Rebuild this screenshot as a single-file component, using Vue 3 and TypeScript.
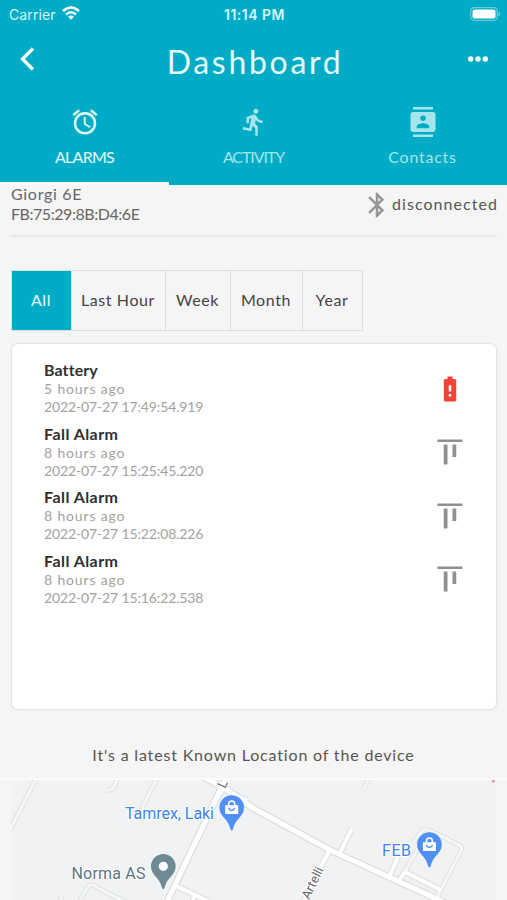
<script setup lang="ts">
import { ref } from 'vue'

interface Tab {
  label: string
  icon: string
}

interface AlarmEntry {
  title: string
  ago: string
  time: string
  kind: 'battery' | 'fall'
}

const tabs: Tab[] = [
  {
    label: 'ALARMS',
    icon: 'M12,20A7,7 0 0,1 5,13A7,7 0 0,1 12,6A7,7 0 0,1 19,13A7,7 0 0,1 12,20M12,4A9,9 0 0,0 3,13A9,9 0 0,0 12,22A9,9 0 0,0 21,13A9,9 0 0,0 12,4M12.5,8H11V14L15.75,16.85L16.5,15.62L12.5,13.25V8M7.88,3.39L6.6,1.86L2,5.71L3.29,7.24L7.88,3.39M22,5.72L17.4,1.86L16.11,3.39L20.71,7.25L22,5.72Z',
  },
  {
    label: 'ACTIVITY',
    icon: 'M13.49 5.48c1.1 0 2-.9 2-2s-.9-2-2-2-2 .9-2 2 .9 2 2 2zm-3.6 13.9l1-4.4 2.1 2v6h2v-7.5l-2.1-2 .6-3c1.3 1.5 3.3 2.5 5.5 2.5v-2c-1.9 0-3.5-1-4.3-2.4l-1-1.6c-.4-.6-1-1-1.7-1-.3 0-.5.1-.8.1l-5.2 2.2v4.7h2v-3.4l1.8-.7-1.6 8.1-4.9-1-.4 2 7 1.4z',
  },
  {
    label: 'Contacts',
    icon: 'M20 0H4v2h16V0zM4 24h16v-2H4v2zM20 4H4c-1.1 0-2 .9-2 2v12c0 1.1.9 2 2 2h16c1.1 0 2-.9 2-2V6c0-1.1-.9-2-2-2zm-8 2.75c1.24 0 2.25 1.01 2.25 2.25s-1.01 2.25-2.25 2.25S9.75 10.24 9.75 9 10.76 6.75 12 6.75zM17 17H7v-1.5c0-1.67 3.33-2.5 5-2.5s5 .83 5 2.5V17z',
  },
]
const activeTab = ref(0)

const ranges: string[] = ['All', 'Last Hour', 'Week', 'Month', 'Year']
const activeRange = ref(0)

const icons: Record<AlarmEntry['kind'], string> = {
  battery:
    'M15.67 4H14V2h-4v2H8.33C7.6 4 7 4.6 7 5.33v15.33C7 21.4 7.6 22 8.33 22h7.33c.74 0 1.34-.6 1.34-1.33V5.33C17 4.6 16.4 4 15.67 4zM13 18h-2v-2h2v2zm0-4h-2V9h2v5z',
  fall: 'M22 2v2H2V2h20zM7 22h3V6H7v16zm7-6h3V6h-3v10z',
}

const alarms: AlarmEntry[] = [
  { title: 'Battery', ago: '5 hours ago', time: '2022-07-27 17:49:54.919', kind: 'battery' },
  { title: 'Fall Alarm', ago: '8 hours ago', time: '2022-07-27 15:25:45.220', kind: 'fall' },
  { title: 'Fall Alarm', ago: '8 hours ago', time: '2022-07-27 15:22:08.226', kind: 'fall' },
  { title: 'Fall Alarm', ago: '8 hours ago', time: '2022-07-27 15:16:22.538', kind: 'fall' },
]

const minorRoads: string[] = [
  'M35 781L10 830',
  'M118 778L114 787Q111 791 106 790',
  'M157 778L142 808',
  'M79 902L88 887Q91 883 95 886L107 893L126 902',
  'M62 896L59 902',
  'M369 778L364 789',
  'M419 847L400 880',
  'M414 842L423 830L429 830L459 845Q463 847 461 851L435 901',
  'M217 800L224 789L248 800',
]
const streets: string[] = [
  'M352 828L340 853',
  'M329 851L302 904',
  'M398 857L390 875',
  'M405 872L441 890',
  'M399 881L405 872',
  'M174 885L210 902',
  'M195 895L192 902',
]
const mainRoads: string[] = ['M225 780L166 904', 'M204 777L227 790L253 808L330 850L448 904']
const pinShape = 'M0-12.3A12.3 12.3 0 0 1 12.3 0C12.3 9.5 3.8 10.5 1.3 21.5Q0 24.5-1.3 21.5C-3.8 10.5-12.3 9.5-12.3 0A12.3 12.3 0 0 1 0-12.3Z'
</script>

<template>
  <main class="screen">
    <header class="header">
      <div class="status">
        <div class="carrier">
          <span>Carrier</span>
          <svg class="wifi" viewBox="0 0 18 14" fill="none" stroke="currentColor" stroke-width="2.5">
            <path d="M1 5.2Q9-2.2 17 5.2M4 8.5Q9 4 14 8.5" />
            <path d="M6.1 10.7Q9 8.2 11.9 10.7L9 13.8Z" fill="currentColor" stroke="none" />
          </svg>
        </div>
        <span class="clock">11:14 PM</span>
        <svg class="battery" viewBox="0 0 30 14">
          <rect x=".7" y=".7" width="26.6" height="12.6" rx="3.6" fill="none" stroke="#fff" stroke-opacity=".4" stroke-width="1.2" />
          <rect x="2.5" y="2.5" width="23" height="9" rx="2" fill="#fff" />
          <path d="M28.5 4.5Q30 5.2 30 7T28.5 9.5Z" fill="#fff" fill-opacity=".45" />
        </svg>
      </div>
      <div class="nav">
        <svg class="back" viewBox="0 0 15 24"><path d="M13 1.5L2.5 12L13 22.5" fill="none" stroke="#fff" stroke-width="3.3" /></svg>
        <h1>Dashboard</h1>
        <svg class="more" viewBox="0 0 20 6" fill="#fff"><circle cx="2.7" cy="3" r="2.7" /><circle cx="10" cy="3" r="2.7" /><circle cx="17.3" cy="3" r="2.7" /></svg>
      </div>
      <nav class="tabs">
        <button v-for="(tab, i) in tabs" :key="tab.label" class="tab" :class="{ active: i === activeTab }" @click="activeTab = i">
          <svg viewBox="0 0 24 24" fill="currentColor"><path :d="tab.icon" /></svg>
          <span>{{ tab.label }}</span>
        </button>
      </nav>
    </header>

    <section class="device">
      <div class="identity">
        <span class="name">Giorgi 6E</span>
        <span class="mac">FB:75:29:8B:D4:6E</span>
      </div>
      <div class="connection">
        <svg viewBox="0 0 24 24" fill="#969696"><path d="M17.71 7.71L12 2h-1v7.59L6.41 5 5 6.41 10.59 12 5 17.59 6.41 19 11 14.41V22h1l5.71-5.71-4.3-4.29 4.3-4.29zM13 5.83l1.88 1.88L13 9.59V5.83zm1.88 10.46L13 18.17v-3.76l1.88 1.88z" /></svg>
        <span>disconnected</span>
      </div>
    </section>

    <div class="ranges">
      <button v-for="(range, i) in ranges" :key="range" class="range" :class="{ active: i === activeRange }" @click="activeRange = i">{{ range }}</button>
    </div>

    <section class="card">
      <article v-for="alarm in alarms" :key="alarm.time" class="alarm">
        <div class="details">
          <h2>{{ alarm.title }}</h2>
          <p class="ago">{{ alarm.ago }}</p>
          <p class="time">{{ alarm.time }}</p>
        </div>
        <svg :class="alarm.kind" viewBox="0 0 24 24" fill="currentColor"><path :d="icons[alarm.kind]" /></svg>
      </article>
    </section>

    <p class="caption">It's a latest Known Location of the device</p>

    <section class="map">
      <svg viewBox="11 780 485 120">
        <g fill="none" stroke-linejoin="round">
          <path v-for="d in minorRoads" :key="'mo' + d" :d="d" stroke="#dfe1e2" stroke-width="5" />
          <path v-for="d in streets" :key="'so' + d" :d="d" stroke="#dcdee0" stroke-width="6" />
          <path v-for="d in mainRoads" :key="'ro' + d" :d="d" stroke="#d9dbdd" stroke-width="7.4" />
          <path v-for="d in minorRoads" :key="'mi' + d" :d="d" stroke="#f5f6f7" stroke-width="3" />
          <path v-for="d in streets" :key="'si' + d" :d="d" stroke="#fff" stroke-width="4" />
          <path v-for="d in mainRoads" :key="'ri' + d" :d="d" stroke="#fff" stroke-width="5.2" />
        </g>
        <g class="labels">
          <text class="street" transform="translate(309 900) rotate(-64)">Artelli</text>
          <text class="street" transform="translate(225 789) rotate(-64)">L</text>
          <text class="place shop" x="125" y="819" textLength="89">Tamrex, Laki</text>
          <text class="place shop" x="382" y="856" textLength="29">FEB</text>
          <text class="place" x="71.5" y="879" textLength="74">Norma AS</text>
        </g>
        <g v-for="p in [[231.7, 807.5], [429.4, 844.5]]" :key="p[0]" :transform="`translate(${p[0]} ${p[1]})`">
          <path :d="pinShape" fill="#4f8ff6" />
          <path d="M-3-2V-3.5A3 3 0 0 1 3-3.5V-2" fill="none" stroke="#fff" stroke-width="1.6" />
          <path d="M-6.5-2.3H6.5V6.5H-6.5Z" fill="#fff" />
          <path d="M-3.2 .7Q0 5.3 3.2 .7" fill="none" stroke="#4f8ff6" stroke-width="1.4" />
        </g>
        <g transform="translate(163.3 866.3)">
          <path :d="pinShape" fill="#6f8a94" />
          <circle r="4.6" fill="#fff" />
        </g>
        <circle cx="493.3" cy="781.2" r="1.3" fill="#ed7f8c" />
      </svg>
    </section>
  </main>
</template>

<style>
body {
  margin: 0;
  background: #f5f5f5;
}
</style>

<style scoped>
.screen {
  box-sizing: border-box;
  height: 900px;
  overflow: hidden;
  background: #f5f5f5;
  font-family: Lato, 'Open Sans', sans-serif;
  color: #444;
}
h1, h2, p { margin: 0; }
button {
  border: 0;
  padding: 0;
  background: none;
  font: inherit;
  color: inherit;
}
svg { display: block; flex: none; }
.header {
  height: 185px;
  background: #00acc5;
  color: #fff;
}
.status {
  display: grid;
  grid-template-columns: 1fr auto 1fr;
  align-items: center;
  height: 28px;
  padding: 0 7px 0 9px;
  font-family: Inter, sans-serif;
  font-size: 14px;
  color: #d5f6fa;
}
.carrier { display: flex; align-items: center; gap: 6px; letter-spacing: .1px; }
.wifi { width: 18px; height: 14px; color: #fff; margin-top: -2px; }
.clock { font-size: 14px; font-weight: 600; letter-spacing: .5px; }
.battery { width: 30px; height: 14px; justify-self: end; margin-top: -1px; }
.nav {
  display: grid;
  grid-template-columns: 1fr auto 1fr;
  align-items: center;
  height: 66px;
  padding: 0 19px 0 20px;
}
.back { width: 15px; height: 24px; margin-top: -5px; }
.more { width: 20px; height: 6px; justify-self: end; margin-top: -5px; }
h1 {
  font-size: 32px;
  line-height: 66px;
  font-weight: 400;
  letter-spacing: 2.7px;
  margin: 1px -2px 0 0;
  color: #e4fafc;
}
.tabs { display: grid; grid-template-columns: repeat(3, 1fr); height: 91px; }
.tab {
  display: flex;
  flex-direction: column;
  align-items: center;
  padding-top: 12.5px;
  gap: 10.5px;
  color: #a5e5ec;
  border-bottom: 3px solid transparent;
  font-size: 16px;
  line-height: 20px;
  letter-spacing: -.75px;
}
.tab svg { width: 30px; height: 30px; }
.tab:last-child { letter-spacing: .75px; }
.tab.active { color: #e4fbfd; border-bottom-color: #f8fafa; }
.tab:nth-child(2) { letter-spacing: -1.1px; }
.device {
  display: flex;
  justify-content: space-between;
  height: 50px;
  margin: 0 10px 0 11px;
  border-bottom: 2px solid #e8e8e8;
  font-size: 16px;
}
.identity { display: flex; flex-direction: column; margin-top: -1.5px; line-height: 20.5px; color: #666; }
.name { letter-spacing: .7px; }
.mac { letter-spacing: -.45px; }
.connection { display: flex; align-items: center; height: 40px; letter-spacing: 1.05px; color: #555; }
.connection svg { width: 30px; height: 30px; }
.connection span { margin: -3px -1px 0 0; }
.ranges {
  display: grid;
  grid-template-columns: 59px 94px 65px 72px 60px;
  width: 350px;
  height: 59px;
  margin: 33px 0 0 11px;
  border: 1px solid #dedede;
}
.range {
  font-size: 16px;
  letter-spacing: .6px;
  padding: 0 1px 2px 0;
}
.range + .range { border-left: 1px solid #dedede; }
.range.active { background: #00acc5; color: #e4fbfd; }
.card {
  box-sizing: border-box;
  height: 367px;
  margin: 12px 10px 0 11px;
  padding: 16px 32px 0;
  border: 1px solid #e4e4e4;
  border-radius: 7px;
  background: #fff;
  box-shadow: 0 0 2px #e6e6e6;
}
.alarm { display: flex; justify-content: space-between; height: 63.5px; }
.alarm svg { width: 30px; height: 30px; margin-top: 13.5px; margin-right: -.5px; }
.alarm .battery { color: #f44336; }
.alarm .fall { color: #909090; }
h2 { font-size: 16px; line-height: 19px; font-weight: 700; letter-spacing: .1px; color: #303030; }
.alarm:not(:first-child) h2 { letter-spacing: .45px; }
.ago, .time { font-size: 14px; color: #a2a2a2; }
.ago { line-height: 20px; letter-spacing: .85px; }
.time { line-height: 15px; letter-spacing: -.13px; }
.caption {
  margin-top: 34px;
  text-align: center;
  font-size: 16px;
  line-height: 22px;
  letter-spacing: .83px;
  color: #555;
}
.map {
  height: 120px;
  margin-top: 12px;
  padding: 0 10px 0 11px;
  border-top: 2px solid #fbfbfb;
}
.map svg { width: 485px; height: 120px; background: #f0f2f3; }
.labels { font-family: Roboto, sans-serif; paint-order: stroke; stroke: #fff; stroke-width: 2px; }
.place { font-size: 16px; fill: #5c7480; }
.shop { fill: #3b82ec; }
.street { font-size: 13px; fill: #666; }
</style>
